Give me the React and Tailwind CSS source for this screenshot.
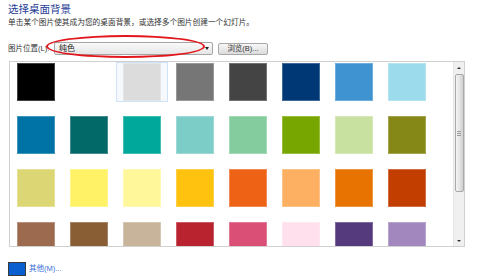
import React from 'react';

const rows = [
  ['#000000', null, '#dcdcdc', '#767676', '#444444', '#003876', '#3f93d0', '#9cdbeb'],
  ['#0073a6', '#036868', '#00a89c', '#7ccdc7', '#84cc9e', '#78a600', '#c8e0a0', '#858716'],
  ['#dcd774', '#fff266', '#fff79a', '#ffc20e', '#ee6216', '#fdb062', '#e87300', '#c23d00'],
  ['#9c6a4e', '#8a5e35', '#c8b39b', '#b8232f', '#da4f75', '#ffe0ec', '#553a7d', '#a187be'],
];

const Swatch = ({ color, selected }) => (
  <div className="relative w-[38px] h-[38px]">
    {selected && (
      <div className="absolute -left-[7px] -right-[7px] -top-[1px] -bottom-[1px] border border-[#cfe3f8] bg-[#f5f9fe]" />
    )}
    {color && (
      <div
        className="relative w-[38px] h-[38px] border border-white/25"
        style={{ backgroundColor: color }}
      />
    )}
  </div>
);

const Scrollbar = () => (
  <div className="w-[11px] h-full bg-[#f0f0f0] border-l border-[#e6e6e6] flex flex-col items-center">
    <div className="h-[11px] w-full flex items-center justify-center">
      <div className="w-0 h-0 border-l-[2px] border-r-[2px] border-b-[2px] border-l-transparent border-r-transparent border-b-[#333]" />
    </div>
    <div className="mt-[1px] w-[9px] h-[118px] rounded-[2px] border border-[#a9a9a9] bg-gradient-to-r from-[#f4f4f4] via-[#e4e4e4] to-[#cfcfcf] flex items-center justify-center">
      <div className="flex flex-col gap-[1px]">
        <div className="w-[4px] h-px bg-[#9a9a9a]" />
        <div className="w-[4px] h-px bg-[#9a9a9a]" />
        <div className="w-[4px] h-px bg-[#9a9a9a]" />
      </div>
    </div>
    <div className="flex-1" />
    <div className="h-[11px] w-full flex items-center justify-center">
      <div className="w-0 h-0 border-l-[2px] border-r-[2px] border-t-[2px] border-l-transparent border-r-transparent border-t-[#333]" />
    </div>
  </div>
);

export default function App() {
  return (
    <div
      className="relative w-[484px] h-[280px] bg-white overflow-hidden"
      style={{ fontFamily: '"Liberation Sans", "Noto Sans CJK SC", sans-serif' }}
    >
      <div className="pl-[8px]">
        <div className="mt-[2px] h-[14px] leading-[14px] text-[10.5px] text-[#1e3c94]">选择桌面背景</div>
        <div className="mt-[2px] h-[10px] leading-[10px] text-[7.7px] text-[#333] whitespace-nowrap">
          单击某个图片使其成为您的桌面背景，或选择多个图片创建一个幻灯片。
        </div>
        <div className="mt-[14px] h-[13px] flex items-center gap-[3px]">
          <div className="w-[43px] shrink-0 whitespace-nowrap text-[7.5px] leading-[13px] text-[#333]">图片位置(L):</div>
          <div className="w-[159px] h-[13px] border border-[#a5a5a5] rounded-[2px] bg-gradient-to-b from-[#fafafa] to-[#e6e6e6] flex items-center pl-[4px] pr-[3px]">
            <span className="flex-1 text-[8px] leading-[11px] text-[#222]">纯色</span>
            <div className="w-0 h-0 border-l-[2.5px] border-r-[2.5px] border-t-[3px] border-l-transparent border-r-transparent border-t-[#222]" />
          </div>
          <div className="ml-[2px] w-[50px] h-[12px] border border-[#a8a8a8] rounded-[2px] bg-gradient-to-b from-[#f7f7f7] to-[#dcdcdc] flex items-center justify-center whitespace-nowrap text-[7.5px] leading-[10px] text-[#333]">
            浏览(B)...
          </div>
        </div>
      </div>

      <div className="ml-[9px] mt-[6px] w-[456px] h-[186px] border border-[#d0d0d0] flex overflow-hidden">
        <div className="flex-1 pl-[7px] pt-[1px] overflow-hidden">
          <div className="grid grid-cols-[repeat(8,38px)] gap-[15px]">
            {rows.map((row, r) =>
              row.map((c, i) => <Swatch key={`${r}-${i}`} color={c} selected={r === 0 && i === 2} />)
            )}
          </div>
        </div>
        <Scrollbar />
      </div>

      <div className="ml-[8px] mt-[15px] flex items-center">
        <div className="w-[18px] h-[14px] border border-[#3a3a3a] bg-[#0a5fd0]" />
        <span className="ml-[3px] whitespace-nowrap text-[7.5px] leading-[10px] text-[#3a6fd8]">其他(M)...</span>
      </div>

      <div className="absolute left-[46px] top-[35px] w-[159px] h-[23px] rounded-[50%] border-2 border-[#e3161b]" />
    </div>
  );
}
